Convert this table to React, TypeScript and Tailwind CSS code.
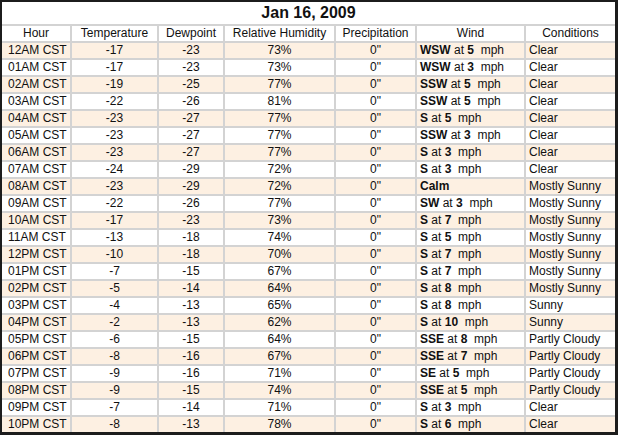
const rows: [string, string, string, string, string, string, string][] = [
  ["12AM CST", "-17", "-23", "73%", "WSW", "5", "Clear"],
  ["01AM CST", "-17", "-23", "73%", "WSW", "3", "Clear"],
  ["02AM CST", "-19", "-25", "77%", "SSW", "5", "Clear"],
  ["03AM CST", "-22", "-26", "81%", "SSW", "5", "Clear"],
  ["04AM CST", "-23", "-27", "77%", "S", "5", "Clear"],
  ["05AM CST", "-23", "-27", "77%", "SSW", "3", "Clear"],
  ["06AM CST", "-23", "-27", "77%", "S", "3", "Clear"],
  ["07AM CST", "-24", "-29", "72%", "S", "3", "Clear"],
  ["08AM CST", "-23", "-29", "72%", "Calm", "", "Mostly Sunny"],
  ["09AM CST", "-22", "-26", "77%", "SW", "3", "Mostly Sunny"],
  ["10AM CST", "-17", "-23", "73%", "S", "7", "Mostly Sunny"],
  ["11AM CST", "-13", "-18", "74%", "S", "5", "Mostly Sunny"],
  ["12PM CST", "-10", "-18", "70%", "S", "7", "Mostly Sunny"],
  ["01PM CST", "-7", "-15", "67%", "S", "7", "Mostly Sunny"],
  ["02PM CST", "-5", "-14", "64%", "S", "8", "Mostly Sunny"],
  ["03PM CST", "-4", "-13", "65%", "S", "8", "Sunny"],
  ["04PM CST", "-2", "-13", "62%", "S", "10", "Sunny"],
  ["05PM CST", "-6", "-15", "64%", "SSE", "8", "Partly Cloudy"],
  ["06PM CST", "-8", "-16", "67%", "SSE", "7", "Partly Cloudy"],
  ["07PM CST", "-9", "-16", "71%", "SE", "5", "Partly Cloudy"],
  ["08PM CST", "-9", "-15", "74%", "SSE", "5", "Partly Cloudy"],
  ["09PM CST", "-7", "-14", "71%", "S", "3", "Clear"],
  ["10PM CST", "-8", "-13", "78%", "S", "6", "Clear"],
];

const headers = ["Hour", "Temperature", "Dewpoint", "Relative Humidity", "Precipitation", "Wind", "Conditions"];

function Wind({ dir, speed }: { dir: string; speed: string }) {
  if (!speed) return <span className="font-bold">{dir}</span>;
  return (
    <span className="whitespace-pre">
      <span className="font-bold">{dir}</span> at <span className="font-bold">{speed}</span>  mph
    </span>
  );
}

export default function App() {
  return (
    <div className="w-[618px] h-[435px] bg-white text-[#111] font-['Liberation_Sans',Arial,sans-serif] text-[12px] leading-[15px]">
      <div className="w-[618px] h-[435px] border-[#1c1c1c] border-t-2 border-l-2 border-r-[3px] border-b-[3px] flex flex-col">
        <div className="h-[22px] shrink-0 flex items-center justify-center text-[16px] font-bold leading-[22px]">
          Jan 16, 2009
        </div>
        <div className="grid grid-cols-[68px_85px_64px_109px_79px_107px_89px] auto-rows-[15px] content-start gap-[2px] bg-[#d3d3d3] pt-[2px]">
          {headers.map((h) => (
            <div key={h} className="bg-white text-center">
              {h}
            </div>
          ))}
          {rows.map((r, i) => {
            const bg = i % 2 === 0 ? "bg-[#fdf0e2]" : "bg-white";
            return [
              <div key={i + "h"} className={`${bg} pl-[6px]`}>{r[0]}</div>,
              <div key={i + "t"} className={`${bg} text-center`}>{r[1]}</div>,
              <div key={i + "d"} className={`${bg} text-center`}>{r[2]}</div>,
              <div key={i + "r"} className={`${bg} text-center`}>{r[3]}</div>,
              <div key={i + "p"} className={`${bg} text-center`}>0"</div>,
              <div key={i + "w"} className={`${bg} pl-[3px]`}>
                <Wind dir={r[4]} speed={r[5]} />
              </div>,
              <div key={i + "c"} className={`${bg} pl-[3px]`}>{r[6]}</div>,
            ];
          })}
        </div>
      </div>
    </div>
  );
}
